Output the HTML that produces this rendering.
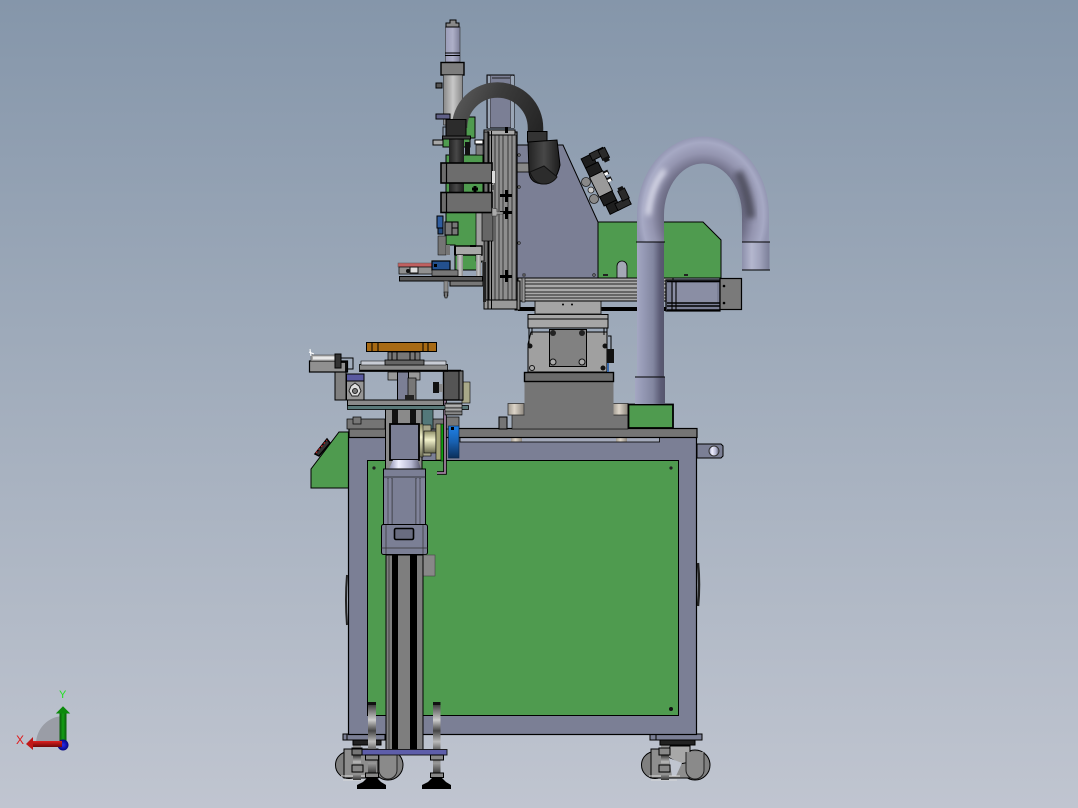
<!DOCTYPE html>
<html><head><meta charset="utf-8"><style>
html,body{margin:0;padding:0;background:#a0a8b8;overflow:hidden}
svg{display:block}
text{font-family:"Liberation Sans",sans-serif}
</style></head><body>
<svg width="1078" height="808" viewBox="0 0 1078 808" xmlns="http://www.w3.org/2000/svg">
<defs>
<linearGradient id="bg" x1="0" y1="0" x2="0" y2="1"><stop offset="0" stop-color="#8596aa"/><stop offset=".5" stop-color="#a3aebd"/><stop offset="1" stop-color="#c0c5d0"/></linearGradient>
<linearGradient id="tl" x1="0" x2="1" y1="0" y2="0"><stop offset="0" stop-color="#a4a7c2"/><stop offset=".25" stop-color="#9599b5"/><stop offset=".6" stop-color="#8286a0"/><stop offset=".85" stop-color="#5c5c76"/><stop offset="1" stop-color="#55556c"/></linearGradient>
<linearGradient id="tr" x1="0" x2="1" y1="0" y2="0"><stop offset="0" stop-color="#8d90ab"/><stop offset=".35" stop-color="#b4b7ce"/><stop offset=".65" stop-color="#a0a3bc"/><stop offset="1" stop-color="#7b7e98"/></linearGradient>
<radialGradient id="arc" gradientUnits="userSpaceOnUse" cx="0" cy="0" r="1" gradientTransform="translate(703 215) scale(66 79)"><stop offset=".55" stop-color="#626279"/><stop offset=".66" stop-color="#76768f"/><stop offset=".78" stop-color="#9495b0"/><stop offset=".92" stop-color="#a6a9c4"/><stop offset="1" stop-color="#9396b2"/></radialGradient>
<filter id="b3" x="-50%" y="-50%" width="200%" height="200%"><feGaussianBlur stdDeviation="3"/></filter>
<filter id="b2" x="-50%" y="-50%" width="200%" height="200%"><feGaussianBlur stdDeviation="1.800"/></filter>
<linearGradient id="blk" gradientUnits="userSpaceOnUse" x1="452" y1="95" x2="543" y2="140"><stop offset="0" stop-color="#5c5c5c"/><stop offset=".4" stop-color="#3c3c3c"/><stop offset="1" stop-color="#222"/></linearGradient>
<linearGradient id="blkv" x1="0" x2="1" y1="0" y2="0"><stop offset="0" stop-color="#222"/><stop offset=".5" stop-color="#484848"/><stop offset="1" stop-color="#1c1c1c"/></linearGradient>
<linearGradient id="blue" x1="0" x2="0" y1="0" y2="1"><stop offset="0" stop-color="#1e82e8"/><stop offset=".5" stop-color="#1860b0"/><stop offset="1" stop-color="#0c2f5a"/></linearGradient>
<linearGradient id="cream" x1="0" x2="0" y1="0" y2="1"><stop offset="0" stop-color="#8e8e68"/><stop offset=".4" stop-color="#f2f2cc"/><stop offset="1" stop-color="#6b6b50"/></linearGradient>
<linearGradient id="tan" x1="0" x2="1" y1="0" y2="0"><stop offset="0" stop-color="#a09a90"/><stop offset=".4" stop-color="#dcd4c8"/><stop offset="1" stop-color="#8d877e"/></linearGradient>
<linearGradient id="rod" x1="0" x2="0" y1="0" y2="1"><stop offset="0" stop-color="#222"/><stop offset=".12" stop-color="#777"/><stop offset=".25" stop-color="#ccc"/><stop offset=".4" stop-color="#444"/><stop offset=".55" stop-color="#bbb"/><stop offset=".7" stop-color="#444"/><stop offset=".85" stop-color="#999"/><stop offset="1" stop-color="#333"/></linearGradient>
<linearGradient id="cone" x1="0" x2="1" y1="0" y2="0"><stop offset="0" stop-color="#8c8fb0"/><stop offset=".3" stop-color="#f0f0ff"/><stop offset=".7" stop-color="#b4b6d0"/><stop offset="1" stop-color="#55566c"/></linearGradient>
<linearGradient id="cyl" x1="0" x2="1" y1="0" y2="0"><stop offset="0" stop-color="#888"/><stop offset=".5" stop-color="#c8c8c8"/><stop offset="1" stop-color="#888"/></linearGradient>
<linearGradient id="pur" x1="0" x2="1" y1="0" y2="0"><stop offset="0" stop-color="#9a9cb8"/><stop offset=".5" stop-color="#aeb0c8"/><stop offset="1" stop-color="#7c7e98"/></linearGradient>
<radialGradient id="triadB"><stop offset="0" stop-color="#2a2af0"/><stop offset="1" stop-color="#060680"/></radialGradient>
<linearGradient id="grn" x1="0" x2="1" y1="0" y2="0"><stop offset="0" stop-color="#0a5a0a"/><stop offset=".5" stop-color="#14a014"/><stop offset="1" stop-color="#0a5a0a"/></linearGradient>
<linearGradient id="red" x1="0" x2="0" y1="0" y2="1"><stop offset="0" stop-color="#e02020"/><stop offset="1" stop-color="#6e0808"/></linearGradient>
</defs>
<rect width="1078" height="808" fill="url(#bg)"/>

<!-- triad -->
<path d="M36 744 A28 28 0 0 1 63 716 L63 744 Z" fill="#9a9da6"/>
<rect x="59.500" y="712" width="7" height="30" fill="url(#grn)"/>
<path d="M57 713 L63 707 L69 713 Z" fill="#0c8a0c" stroke="#0c8a0c"/>
<circle cx="63" cy="745" r="5.500" fill="url(#triadB)"/>
<rect x="32" y="741" width="30" height="6" fill="url(#red)"/>
<path d="M33 737 L26 744 L33 750 Z" fill="#c01818"/>
<text x="59" y="698" font-size="11" fill="#22e022">Y</text>
<text x="16" y="744" font-size="12" fill="#e01818">X</text>

<!-- left green panel -->
<path d="M311 488V469L339 432H349V488Z" fill="#4f9b4f" stroke="#000"/>
<path d="M315 454L327 439L330 443L319 456Z" fill="#333" stroke="#000" stroke-width="1.500"/>
<path d="M316 453L327 440" stroke="#d02020" stroke-width="1" stroke-dasharray="2 2"/>

<!-- side handles -->
<path d="M347 575Q345 600 347 625" stroke="#222" stroke-width="2" fill="none"/>
<path d="M698 563Q700 585 698 606" stroke="#222" stroke-width="2.500" fill="none"/>

<!-- casters -->
<g stroke="#000" stroke-width="1">
<circle cx="349" cy="765" r="13.500" fill="#808080"/>
<circle cx="388" cy="765" r="15" fill="#808080"/>
<path d="M344 749H378V778H344Z" fill="#8e8e8e"/>
<path d="M341 776H377M343 780H373" stroke="#d8d8d8" stroke-width="1" fill="none"/>
<rect x="353" y="740" width="8" height="40" fill="url(#rod)" stroke="none"/>
<rect x="352" y="748" width="10" height="7" fill="#888"/>
<rect x="352" y="765" width="11" height="7" fill="#888"/>
<path d="M353 740H381V745H353Z" fill="#222"/>
<path d="M379 752V770A9 9 0 0 0 397 770V752" fill="#8a8a8a" stroke="#222"/>
<path d="M343 734H385V740H343Z" fill="#7b7f95"/>
<path d="M347 734V740"/>
</g>
<g stroke="#000" stroke-width="1">
<circle cx="655" cy="765" r="13.500" fill="#808080"/>
<circle cx="695" cy="765" r="15" fill="#808080"/>
<path d="M651 749H690V778H651Z" fill="#8e8e8e"/>
<path d="M670 746H690V762L680 764L668 757Z" fill="#a8a8a8"/>
<path d="M669 758L682 763L676 776H672Z" fill="#c0c5d0" stroke="none"/>
<path d="M649 776H680M651 780H677" stroke="#d8d8d8" stroke-width="1" fill="none"/>
<rect x="661" y="740" width="8" height="40" fill="url(#rod)" stroke="none"/>
<rect x="659" y="748" width="11" height="7" fill="#888"/>
<rect x="659" y="765" width="11" height="7" fill="#888"/>
<path d="M660 740H695V745H660Z" fill="#222"/>
<path d="M686 752V770A9 9 0 0 0 704 770V752" fill="#8a8a8a" stroke="#222"/>
<path d="M650 734H702V740H650Z" fill="#7b7f95"/>
<path d="M656 734V740"/>
</g>

<!-- main frame -->
<rect x="348.500" y="432" width="348" height="302.500" fill="#7b7f95" stroke="#000" stroke-width="1.200"/>
<rect x="367.500" y="460.500" width="311" height="255" fill="#4f9b4f" stroke="#000" stroke-width="1"/>
<circle cx="374" cy="468" r="1.600" fill="#222"/><circle cx="671" cy="468" r="1.600" fill="#222"/>
<circle cx="671" cy="709" r="2" fill="#111"/>
<!-- side bracket -->
<path d="M697 444H721L723 446V456L721 458H697Z" fill="#7b7f95" stroke="#000"/>
<circle cx="714" cy="451" r="5" fill="url(#cone)" stroke="#333"/>

<!-- light strip under top -->
<rect x="460" y="437" width="199.500" height="5" fill="#a3a9ba" stroke="#000" stroke-width=".8"/>
<rect x="511" y="437.500" width="11" height="4" fill="url(#tan)"/>
<rect x="616" y="437.500" width="11" height="4" fill="url(#tan)"/>
<rect x="349" y="428.500" width="348" height="9" fill="#757575" stroke="#000" stroke-width="1.200"/>

<!-- pedestal -->
<rect x="512" y="415" width="116" height="14" fill="#757575" stroke="#000" stroke-width=".6"/>
<rect x="499" y="417" width="8" height="12" fill="#757575" stroke="#000"/>
<rect x="508" y="403.500" width="16" height="11.500" fill="url(#tan)" stroke="#333" stroke-width=".8"/>
<rect x="613" y="403.500" width="15" height="11.500" fill="url(#tan)" stroke="#333" stroke-width=".8"/>
<rect x="524.500" y="381" width="89" height="40" fill="#757575"/>
<rect x="524.500" y="372.500" width="89" height="9" fill="#6b6b6b" stroke="#000" stroke-width="1.400"/>
<rect x="628.500" y="404.500" width="44.500" height="23.500" fill="#4f9b4f" stroke="#000" stroke-width="1.800"/>

<!-- rotary motor plate -->
<path d="M528 372V344L531 332H607V372Z" fill="#a0a0a0" stroke="#000"/>
<path d="M529 328V345M532 328V335M607 328V345M604 328V335" stroke="#000" fill="none"/>
<rect x="549.500" y="329.500" width="37" height="37" fill="#818181" stroke="#000"/>
<circle cx="553" cy="333" r="3" fill="#222"/><circle cx="582" cy="333" r="3" fill="#222"/>
<circle cx="553" cy="362" r="3" fill="#aaa" stroke="#111"/><circle cx="582" cy="362" r="3" fill="#aaa" stroke="#111"/>
<circle cx="532" cy="368" r="2.500" fill="#aaa" stroke="#111"/><circle cx="603" cy="368" r="2.500" fill="#111"/>
<circle cx="530" cy="346" r="2.500" fill="#111"/><circle cx="605" cy="346" r="2.500" fill="#111"/>
<rect x="607" y="349" width="7" height="14" fill="#111"/>
<rect x="607" y="363" width="2" height="9" fill="#3a68a8"/>
<path d="M608 336H611V349" stroke="#000" fill="none"/>
<rect x="528" y="314.500" width="80" height="13.500" fill="#a6a6a6" stroke="#000"/>
<path d="M528 319H608" stroke="#000"/>
<path d="M518 309H537M600 309H667" stroke="#000" stroke-width="4"/>
<rect x="535" y="301" width="66" height="13" fill="#a4a4a4" stroke="#222"/>
<circle cx="563" cy="304.500" r="1" fill="#000"/><circle cx="572" cy="304.500" r="1" fill="#000"/>

<!-- gray plate -->
<path d="M517 145H563L598 222V278H517Z" fill="#7b7f95" stroke="#000" stroke-width="1"/>
<!-- green plate -->
<path d="M598 222H703L721 240V278H598Z" fill="#4f9b4f" stroke="#000" stroke-width="1"/>
<path d="M617 278V266A4.500 4.500 0 0 1 627 266V278Z" fill="#a4a8b6" stroke="#000" stroke-width=".8"/>
<rect x="603" y="274" width="2" height="2" fill="#222"/><rect x="605" y="274" width="3" height="2" fill="#222"/><rect x="684" y="274" width="4" height="2" fill="#222"/>
<g fill="#ccc" stroke="#111" stroke-width=".8"><circle cx="519" cy="155" r="1.200"/><circle cx="519" cy="187" r="1.200"/><circle cx="519" cy="243" r="1.200"/><rect x="523" y="274" width="2" height="2"/><circle cx="594" cy="275" r="1.200"/></g>
<rect x="517" y="163" width="12" height="9" fill="#888" stroke="#000" stroke-width=".8"/>

<!-- rail -->
<rect x="518" y="278" width="155" height="23" fill="#a8a8a8" stroke="#000" stroke-width="1"/>
<path d="M522 281H670M522 284H670M522 288H670M522 292H670M522 295H670M522 298H670" stroke="#222" stroke-width=".9"/>
<rect x="522" y="278" width="3" height="24" fill="#999" stroke="#000" stroke-width=".6"/>
<rect x="515" y="281" width="5" height="29" fill="#888" stroke="#000"/>

<!-- right servo -->
<rect x="666" y="280" width="54" height="31" fill="#7b7f95" stroke="#000" stroke-width="1.200"/>
<rect x="673" y="283" width="44" height="20" fill="#8a8ea4"/>
<path d="M667 281.500H720M667 303H720M667 306H720M667 310H720" stroke="#000" stroke-width="1.500"/>
<path d="M672 281V311M676 281V311" stroke="#000" stroke-width="1.100"/>
<rect x="720" y="278.500" width="21.500" height="31" fill="#7a7a7a" stroke="#000" stroke-width="1.200"/>
<circle cx="724" cy="286" r="1.300" fill="#000"/><circle cx="724" cy="303" r="1.300" fill="#000"/>

<!-- top purple frame -->
<rect x="487" y="75" width="27" height="53" fill="#7b7f95" stroke="#000"/>
<path d="M490 75V128M511 75V128M492 78H510M487 95H514" stroke="#222" stroke-width=".9"/>
<rect x="488" y="76" width="2" height="52" fill="#9aa6b6"/><rect x="511" y="76" width="3" height="52" fill="#9aa6b6"/>

<!-- vertical rail -->
<rect x="484" y="132" width="33" height="169" fill="#8e8e8e" stroke="#000" stroke-width="1.200"/>
<rect x="484" y="130" width="31" height="5" fill="#aaa" stroke="#000"/>
<rect x="484" y="132" width="5" height="169" fill="#6e6e6e" stroke="#000" stroke-width=".9"/>
<path d="M495 135V306M499 135V306M503 135V306M508 135V306M512 135V306M516 135V306" stroke="#111" stroke-width=".7"/>
<rect x="484" y="300" width="33" height="9" fill="#999" stroke="#000"/>
<path d="M488 131V309M491.500 131V309" stroke="#000" stroke-width="1"/>
<g fill="#000"><rect x="500" y="194" width="12" height="3"/><rect x="505" y="190" width="3" height="12"/><rect x="500" y="211" width="12" height="3"/><rect x="505" y="207" width="3" height="12"/><rect x="500" y="275" width="12" height="3"/><rect x="505" y="270" width="3" height="12"/><rect x="505" y="127" width="3" height="6"/></g>

<!-- left carriage column -->
<rect x="445.500" y="27" width="14.500" height="35" fill="url(#pur)" stroke="#333" stroke-width=".6"/>
<path d="M446 23H450V20H456V23H459V27H446Z" fill="#888" stroke="#000" stroke-width="1"/>
<path d="M445 53H460M445 55.500H460" stroke="#000" stroke-width="1"/>
<rect x="441" y="62.500" width="23" height="12.500" fill="#7d7d7d" stroke="#000" stroke-width="1.400"/>
<rect x="443.500" y="75" width="19" height="50" fill="url(#cyl)" stroke="#222" stroke-width=".6"/>
<rect x="436" y="83" width="6" height="5" fill="#555" stroke="#000"/>
<rect x="436" y="114" width="14" height="5" fill="#606088" stroke="#000"/>

<!-- green block behind -->
<rect x="466" y="117" width="9" height="21" fill="#4f9b4f" stroke="#000"/>
<rect x="443" y="127" width="4" height="10" fill="none" stroke="#000" stroke-width=".8"/>
<rect x="443" y="138" width="27" height="9" fill="#4f9b4f" stroke="#000"/>
<path d="M446 155H483V262H480V270H455V245H446Z" fill="#4f9b4f" stroke="#000"/>
<rect x="433" y="140" width="10" height="5" fill="#a8a8a8" stroke="#000"/>
<rect x="475" y="140" width="8" height="4" fill="#fff" stroke="#000"/>
<rect x="465" y="142" width="5" height="13" fill="#111"/>
<rect x="476" y="145" width="7" height="10" fill="#7a7a7a" stroke="#000" stroke-width=".6"/>

<!-- black hose -->
<path d="M459.500 125V128A38 38 0 0 1 535.500 128V136" fill="none" stroke="url(#blk)" stroke-width="15.500"/>
<rect x="449" y="137" width="15" height="55" fill="url(#blkv)"/>
<rect x="446" y="119.500" width="20" height="17.500" fill="#2c2c2c" stroke="#000"/>
<rect x="442.500" y="136" width="28" height="3" fill="#444" stroke="#000"/>
<rect x="527.500" y="131.500" width="19.500" height="10.500" fill="#333" stroke="#000"/>
<path d="M528 142L557 140L560 165Q556 184 544 184Q530 184 529 172Z" fill="url(#blkv)" stroke="#000"/>
<path d="M530 172L544 166L557 177Q552 184 544 184Q534 184 530 172Z" fill="#2c2c2c" stroke="#111"/>

<!-- clamps -->
<rect x="441" y="163" width="51" height="20" fill="#6d6d6d" stroke="#000" stroke-width="1.600"/>
<path d="M446.500 163V183" stroke="#000" stroke-width="1.200"/>
<rect x="441" y="192.500" width="51" height="20" fill="#6d6d6d" stroke="#000" stroke-width="1.600"/>
<path d="M446.500 192V213" stroke="#000" stroke-width="1.200"/>
<rect x="492" y="171" width="3" height="12" fill="#ddd"/>
<path d="M472 189h6M475 186v6" stroke="#000" stroke-width="3"/>
<rect x="492" y="185" width="2" height="5" fill="#555"/>

<!-- lower carriage -->
<rect x="482" y="213" width="3" height="66" fill="#555"/>
<rect x="476" y="213" width="8" height="48" fill="#a0a0a0" stroke="#000" stroke-width=".7"/>
<rect x="482" y="213" width="11" height="28" fill="#666" stroke="#000" stroke-width=".7"/>
<path d="M492 208L497 209V212L503 212V214H497V216H492Z" fill="#aaa" stroke="#333" stroke-width=".6"/>
<rect x="437" y="216" width="6" height="12" fill="#2f5d9f" stroke="#000"/>
<rect x="438" y="228" width="5" height="6" fill="#234a80" stroke="#000"/>
<rect x="445" y="222" width="13" height="13" fill="#777" stroke="#000" stroke-width="1.100"/>
<path d="M452 222V235M452 228H458" stroke="#000"/>
<rect x="438" y="236" width="8" height="19" fill="#757575" stroke="#000" stroke-width=".5"/>
<path d="M446 245H450V255H446Z" fill="#757575"/>
<rect x="455" y="246" width="27" height="9" fill="#a8a8a8" stroke="#000" stroke-width="1.400"/>
<path d="M455 246V255M470 246H476" stroke="#000" stroke-width="2"/>
<rect x="457" y="255" width="6" height="22" fill="url(#cyl)"/>
<rect x="476" y="255" width="5" height="22" fill="url(#cyl)"/>

<!-- tool plate -->
<rect x="398" y="263" width="35" height="4" fill="#c06060" stroke="#555" stroke-width=".5"/>
<rect x="399" y="267" width="35" height="7" fill="#909090" stroke="#000" stroke-width=".7"/>
<rect x="410" y="267" width="8" height="6" fill="#ddd" stroke="#111"/>
<circle cx="408" cy="271" r="2" fill="#111"/>
<rect x="432" y="261" width="18" height="9" fill="#23508e" stroke="#000" stroke-width="1.200"/>
<rect x="434" y="264" width="3" height="3" fill="#000"/>
<rect x="432" y="270" width="26" height="6" fill="#777" stroke="#000" stroke-width=".6"/>
<rect x="399.500" y="276.500" width="83" height="4.500" fill="#5a5a5a" stroke="#000" stroke-width="1"/>
<rect x="450" y="281" width="33" height="5" fill="#777" stroke="#000" stroke-width="1"/>
<rect x="444" y="281" width="4" height="15" fill="#8c8c8c" stroke="#222" stroke-width=".5"/>
<path d="M444 292H448L447 298H445Z" fill="#777" stroke="#000" stroke-width=".6"/>
<rect x="483" y="262" width="3" height="40" fill="#222"/>

<!-- pneumatic valve -->
<g transform="translate(601 184) rotate(-26) scale(.92)">
<rect x="-8" y="-12" width="16" height="24" fill="#9a9a9a" stroke="#000"/>
<rect x="-7.500" y="-23" width="15" height="11" fill="#1e1e1e" stroke="#000"/>
<rect x="-7.500" y="-34" width="13" height="11" fill="#1e1e1e" stroke="#000"/>
<rect x="-7.500" y="12" width="15" height="11" fill="#1e1e1e" stroke="#000"/>
<rect x="-5.500" y="23" width="13" height="11" fill="#1e1e1e" stroke="#000"/>
<rect x="3" y="-35" width="16" height="8" fill="#2a2a2a" stroke="#000"/>
<rect x="13" y="-34" width="8" height="12" fill="#2a2a2a" stroke="#000"/>
<rect x="14" y="-24" width="6" height="5" fill="#111"/>
<rect x="4" y="26" width="16" height="8" fill="#2a2a2a" stroke="#000"/>
<rect x="13" y="15" width="8" height="12" fill="#2a2a2a" stroke="#000"/>
<rect x="14" y="12" width="6" height="4" fill="#111"/>
<rect x="8" y="-11" width="5" height="5" fill="#111"/><rect x="8" y="-3" width="5" height="5" fill="#111"/>
<rect x="8" y="-9" width="4" height="3" fill="#fff"/><rect x="8" y="-1" width="4" height="3" fill="#fff"/>
</g>
<circle cx="586" cy="182" r="4.500" fill="#888" stroke="#222" stroke-width=".8"/>
<circle cx="591" cy="190" r="3" fill="#ccc" stroke="#222" stroke-width=".8"/>
<circle cx="594" cy="199" r="4.500" fill="#888" stroke="#222" stroke-width=".8"/>

<!-- big tube -->
<path d="M650.500 243V215A52.500 65 0 0 1 755.500 215V243" fill="none" stroke="url(#arc)" stroke-width="27"/>
<path d="M648 215Q651 185 665 170" fill="none" stroke="#f0f1fc" stroke-width="5" filter="url(#b3)" opacity=".85"/>
<path d="M738 172Q748 190 751 218" fill="none" stroke="#3a3a46" stroke-width="9" filter="url(#b3)" opacity=".7"/>
<path d="M766 190V240" fill="none" stroke="#55556c" stroke-width="4" filter="url(#b2)" opacity=".7"/>
<path d="M752 225V243" fill="none" stroke="#b4b7ce" stroke-width="8" filter="url(#b2)"/>
<rect x="637" y="242" width="27" height="136" fill="url(#tl)"/>
<rect x="742" y="242" width="27.500" height="28" fill="url(#tr)"/>
<path d="M636 242H665M742 242H770M742 270H770" stroke="#000" stroke-width=".9"/>
<rect x="635" y="377" width="30" height="27" fill="url(#tl)"/>
<path d="M635 377H665" stroke="#000" stroke-width=".9"/>

<!-- lower column and fixture -->
<rect x="347" y="419" width="38" height="10" fill="#757575" stroke="#000" stroke-width=".7"/>
<rect x="353" y="417" width="8" height="7" fill="#777" stroke="#000" stroke-width=".7"/>
<rect x="420" y="419" width="26" height="10" fill="#757575" stroke="#000" stroke-width=".7"/>
<rect x="422" y="408" width="11" height="21" fill="#53787a" stroke="#000" stroke-width=".7"/>
<rect x="444" y="417" width="15" height="12" fill="#777" stroke="#000" stroke-width=".7"/>
<rect x="385.500" y="405" width="36.500" height="64" fill="#8a8a8a" stroke="#000" stroke-width="1"/>
<rect x="392" y="405" width="6" height="20" fill="#111"/><rect x="410" y="405" width="6" height="20" fill="#111"/>
<rect x="419" y="425" width="12" height="31" fill="#a5a58a" stroke="#000" stroke-width=".6"/>
<rect x="418" y="424" width="5" height="33" fill="url(#cream)" stroke="#000" stroke-width=".5"/>
<rect x="424" y="431" width="12" height="22" fill="url(#cream)" stroke="#000" stroke-width=".6"/>
<rect x="436" y="424" width="5" height="36" fill="#a5a578" stroke="#000" stroke-width=".6"/>
<rect x="441" y="424" width="3" height="37" fill="#10a010" stroke="#000" stroke-width=".5"/>
<rect x="448.500" y="426" width="10.500" height="32" fill="url(#blue)" stroke="#0a2a50" stroke-width=".7"/>
<rect x="451" y="427" width="3" height="3" fill="#000"/>
<rect x="390" y="424" width="29" height="36" fill="#7b7f95" stroke="#000" stroke-width="1.800"/>
<path d="M389 469L393 460H418L421 469Z" fill="url(#cone)"/>
<path d="M445 400V473H437" stroke="#000" stroke-width="3.600" fill="none"/><path d="M445 400V473H437" stroke="#a080a0" stroke-width="1.800" fill="none"/>

<!-- motor -->
<rect x="383.500" y="469" width="42" height="56" fill="#7b7f95" stroke="#000" stroke-width="1"/>
<path d="M383.500 477H425.500M388 478V524M392 478V524M416 478V524M420 478V524" stroke="#222" stroke-width=".8"/>
<path d="M384 479H392V524H384ZM416 479H425V524H416Z" fill="#8a8da3" opacity=".35"/>
<rect x="381.500" y="524.500" width="46" height="30" rx="2" fill="#7b7f95" stroke="#000" stroke-width="1"/>
<path d="M381.500 548H427.500M386 525V554M423 525V554" stroke="#333" stroke-width=".7"/>
<rect x="394.500" y="528.500" width="19" height="11" rx="1.500" fill="#696c80" stroke="#000" stroke-width="1.600"/>
<rect x="422" y="555" width="13" height="21" fill="#888" stroke="#444" stroke-width=".6"/>

<!-- column striped -->
<rect x="386" y="555" width="37" height="195" fill="#7e7e7e" stroke="#000" stroke-width="1"/>
<rect x="392" y="555" width="6" height="195" fill="#000"/>
<rect x="410" y="555" width="7" height="195" fill="#000"/>
<path d="M389 555V750" stroke="#333" stroke-width=".8"/>

<!-- fixture top -->
<rect x="347.500" y="400" width="96" height="5.500" fill="#8a8a8a" stroke="#000" stroke-width="1"/>
<rect x="347.500" y="405.500" width="121" height="4" fill="#587878" stroke="#000" stroke-width=".8"/>
<rect x="462" y="382" width="8" height="21" fill="#a8a888" stroke="#000" stroke-width=".6"/>
<rect x="443.500" y="371" width="19" height="29" fill="#555" stroke="#000" stroke-width="1.400"/>
<rect x="459" y="371" width="4" height="29" fill="#6d6d6d" stroke="#000"/>
<path d="M433 382H439V393H433Z" fill="#111"/><rect x="439" y="384" width="4" height="8" fill="#888"/>
<rect x="445" y="403" width="17" height="12" fill="url(#rod)" stroke="#000" stroke-width=".6"/>
<rect x="359.500" y="364.500" width="88" height="7" fill="#8a8a8a" stroke="#000" stroke-width=".8"/>
<path d="M360 370.500H461" stroke="#000" stroke-width="1.400"/>
<path d="M361 361H446V365H361Z" fill="#c8ccd5" stroke="#000" stroke-width=".6"/>
<rect x="385" y="360" width="39" height="5" fill="#666" stroke="#000" stroke-width=".8"/>
<rect x="388" y="352" width="32" height="8" fill="#777" stroke="#000" stroke-width=".8"/>
<path d="M392 352V360M397 352V360M410 352V360M415 352V360" stroke="#000"/>
<rect x="366.500" y="342.500" width="70" height="9" fill="#a86a14" stroke="#000" stroke-width="1"/>
<path d="M372 342V351.500M378 342V351.500M423 342V351.500M428 342V351.500" stroke="#000"/>
<rect x="388" y="372" width="32" height="8" fill="#999" stroke="#000" stroke-width=".7"/>
<rect x="397.500" y="372" width="11" height="28" fill="#7b7f95" stroke="#000"/>
<rect x="408" y="378" width="8" height="22" fill="#777" stroke="#000" stroke-width=".7"/>
<rect x="405" y="395" width="9" height="5" fill="#222"/>
<!-- small left block -->
<rect x="346.500" y="374" width="17.500" height="7" fill="#5a5aa0" stroke="#000"/>
<rect x="346.500" y="381" width="17.500" height="19" fill="#969696" stroke="#000"/>
<path d="M351 386L355 383L359 386L361 391L358 396L352 396L349 391Z" fill="#ddd" stroke="#222"/>
<circle cx="355" cy="391" r="2.500" fill="#777" stroke="#222"/>
<rect x="335" y="372" width="11" height="28" fill="#808080" stroke="#000"/>
<rect x="309.500" y="361" width="38" height="11" fill="#909090" stroke="#000" stroke-width="1.200"/>
<rect x="311" y="355" width="24" height="6" fill="#aaa" stroke="#444" stroke-width=".6"/>
<path d="M313 358H336" stroke="#e8e8e8" stroke-width="3"/>
<rect x="335" y="354" width="6" height="14" fill="#333" stroke="#000"/>
<path d="M310 349L311 356M309 352L314 354" stroke="#fff" stroke-width="1"/>
<path d="M341 358H353V369H346" fill="none" stroke="#000"/>
<path d="M341 362H346V372" fill="none" stroke="#000" stroke-width="1.800"/>

<!-- feet -->
<rect x="368" y="702" width="8" height="72" fill="url(#rod)"/>
<rect x="433" y="702" width="7.500" height="72" fill="url(#rod)"/>
<rect x="368" y="702" width="8" height="3" fill="#111"/><rect x="433" y="702" width="7.500" height="3" fill="#111"/>
<rect x="352.500" y="749.500" width="94.500" height="5.500" fill="#5e5eaa" stroke="#111" stroke-width=".9"/>
<rect x="352" y="749" width="10" height="6" fill="#777" stroke="#000"/>
<rect x="365.500" y="755" width="13" height="5" fill="#888" stroke="#000"/>
<rect x="430.500" y="755" width="13" height="5" fill="#888" stroke="#000"/>
<rect x="365.500" y="773" width="13" height="4.500" fill="#888" stroke="#000"/>
<rect x="430.500" y="773" width="13" height="4.500" fill="#888" stroke="#000"/>
<path d="M363 782L367 778H377L381 782L386 785V789H357V785Z" fill="#000"/>
<path d="M428 782L432 778H442L446 782L451 785V789H422V785Z" fill="#000"/>
</svg>
</body></html>
